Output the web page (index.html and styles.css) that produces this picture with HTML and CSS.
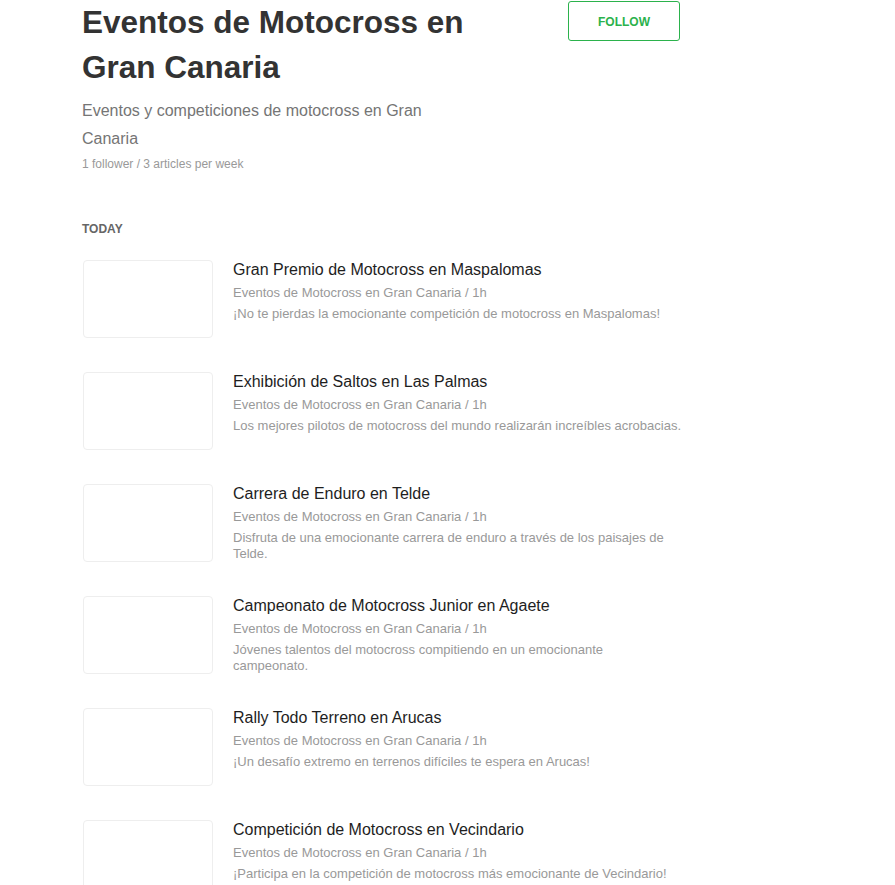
FILE: index.html
```html
<!DOCTYPE html>
<html lang="es">
<head>
<meta charset="utf-8">
<title>Eventos de Motocross en Gran Canaria</title>
<link rel="stylesheet" href="styles.css">
</head>
<body>
<div class="page">
  <header class="feed-header">
    <div class="feed-info">
      <h1 class="feed-title">Eventos de Motocross en Gran Canaria</h1>
      <p class="feed-desc">Eventos y competiciones de motocross en Gran Canaria</p>
      <p class="feed-stats">1 follower / 3 articles per week</p>
    </div>
    <button class="follow-btn">FOLLOW</button>
  </header>

  <section class="day">
    <h2 class="day-label">TODAY</h2>
    <ul class="articles">
      <li class="article">
        <div class="thumb"></div>
        <div class="article-body">
          <h3 class="article-title">Gran Premio de Motocross en Maspalomas</h3>
          <div class="article-meta">Eventos de Motocross en Gran Canaria / 1h</div>
          <p class="article-summary">¡No te pierdas la emocionante competición de motocross en Maspalomas!</p>
        </div>
      </li>
      <li class="article">
        <div class="thumb"></div>
        <div class="article-body">
          <h3 class="article-title">Exhibición de Saltos en Las Palmas</h3>
          <div class="article-meta">Eventos de Motocross en Gran Canaria / 1h</div>
          <p class="article-summary">Los mejores pilotos de motocross del mundo realizarán increíbles acrobacias.</p>
        </div>
      </li>
      <li class="article">
        <div class="thumb"></div>
        <div class="article-body">
          <h3 class="article-title">Carrera de Enduro en Telde</h3>
          <div class="article-meta">Eventos de Motocross en Gran Canaria / 1h</div>
          <p class="article-summary">Disfruta de una emocionante carrera de enduro a través de los paisajes de Telde.</p>
        </div>
      </li>
      <li class="article">
        <div class="thumb"></div>
        <div class="article-body">
          <h3 class="article-title">Campeonato de Motocross Junior en Agaete</h3>
          <div class="article-meta">Eventos de Motocross en Gran Canaria / 1h</div>
          <p class="article-summary">Jóvenes talentos del motocross compitiendo en un emocionante campeonato.</p>
        </div>
      </li>
      <li class="article">
        <div class="thumb"></div>
        <div class="article-body">
          <h3 class="article-title">Rally Todo Terreno en Arucas</h3>
          <div class="article-meta">Eventos de Motocross en Gran Canaria / 1h</div>
          <p class="article-summary">¡Un desafío extremo en terrenos difíciles te espera en Arucas!</p>
        </div>
      </li>
      <li class="article">
        <div class="thumb"></div>
        <div class="article-body">
          <h3 class="article-title">Competición de Motocross en Vecindario</h3>
          <div class="article-meta">Eventos de Motocross en Gran Canaria / 1h</div>
          <p class="article-summary">¡Participa en la competición de motocross más emocionante de Vecindario!</p>
        </div>
      </li>
    </ul>
  </section>
</div>
</body>
</html>
```
FILE: styles.css
```css
html, body {
  margin: 0;
  padding: 0;
  background: #fff;
}
body {
  font-family: "Liberation Sans", Arial, sans-serif;
  color: #333;
  overflow: hidden;
}
.page {
  width: 599px;
  padding-left: 82px;
}
.feed-header {
  display: flex;
  justify-content: space-between;
  align-items: flex-start;
}
.feed-info {
  width: 392px;
}
.feed-title {
  margin: 0;
  font-size: 31.5px;
  line-height: 45px;
  font-weight: bold;
  color: #333;
}
.feed-desc {
  margin: 7px 0 0;
  font-size: 16px;
  line-height: 28px;
  color: #757575;
}
.feed-stats {
  margin: 3px 0 0;
  font-size: 12px;
  line-height: 16px;
  color: #999;
}
.follow-btn {
  margin: 1px 1px 0 0;
  width: 112px;
  height: 40px;
  border: 1px solid #2bb24c;
  border-radius: 3px;
  background: #fff;
  color: #2bb24c;
  font-family: "Liberation Sans", Arial, sans-serif;
  font-size: 12px;
  font-weight: bold;
  padding: 1px 0 0;
}
.day {
  margin-top: 49px;
}
.day-label {
  margin: 0;
  font-size: 12px;
  line-height: 16px;
  font-weight: bold;
  color: #666;
}
.articles {
  list-style: none;
  margin: 23px 0 0;
  padding: 0;
}
.article {
  display: flex;
  gap: 20px;
  height: 112px;
}
.thumb {
  flex: none;
  width: 128px;
  height: 76px;
  margin-left: 1px;
  border: 1px solid #eee;
  border-radius: 4px;
}
.article-body {
  flex: 1;
  min-width: 0;
}
.article-title {
  margin: 0;
  font-size: 16px;
  line-height: 20px;
  font-weight: normal;
  color: #1e1e1e;
}
.article-meta {
  margin-top: 4px;
  font-size: 13px;
  line-height: 18px;
  color: #999;
}
.article-summary {
  margin: 4px 0 0;
  font-size: 13px;
  line-height: 16px;
  color: #999;
}
```
